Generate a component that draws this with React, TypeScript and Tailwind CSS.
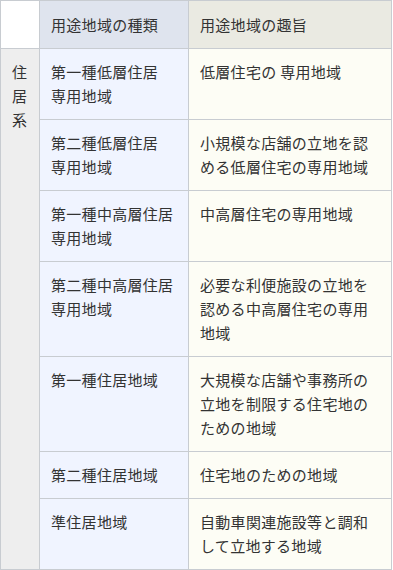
import { Fragment } from "react";

const rows: { kind: string[]; desc: string }[] = [
  { kind: ["第一種低層住居", "専用地域"], desc: "低層住宅の 専用地域" },
  { kind: ["第二種低層住居", "専用地域"], desc: "小規模な店舗の立地を認める低層住宅の専用地域" },
  { kind: ["第一種中高層住居", "専用地域"], desc: "中高層住宅の専用地域" },
  { kind: ["第二種中高層住居", "専用地域"], desc: "必要な利便施設の立地を認める中高層住宅の専用地域" },
  { kind: ["第一種住居地域"], desc: "大規模な店舗や事務所の立地を制限する住宅地のための地域" },
  { kind: ["第二種住居地域"], desc: "住宅地のための地域" },
  { kind: ["準住居地域"], desc: "自動車関連施設等と調和して立地する地域" },
];

const cell = "border-r border-b border-[#c8ccd1] px-[11px] py-[11px]";
const head = "border-r border-b border-[#c8ccd1] px-[11px] pt-[12px] pb-[11px]";

export default function App() {
  return (
    <div
      className="bg-white text-[15px] leading-6 tracking-[0.3px] text-[#333333]"
      style={{ fontFamily: '"Noto Sans CJK JP", "Noto Sans", sans-serif' }}
    >
      <div className="grid w-[392px] grid-cols-[39px_149px_203px] border-l border-t border-[#c8ccd1]">
        <div className={head + " bg-white"} />
        <div className={head + " bg-[#dfe4ee]"}>用途地域の種類</div>
        <div className={head + " bg-[#eaeae2]"}>用途地域の趣旨</div>

        <div className={cell + " row-span-7 bg-[#eeeeee] break-all"}>住居系</div>
        {rows.map((r, i) => (
          <Fragment key={i}>
            <div className={cell + " bg-[#f0f4ff]"}>
              {r.kind.map((k, j) => (
                <div key={j}>{k}</div>
              ))}
            </div>
            <div className={cell + " bg-[#fdfdf5]"}>{r.desc}</div>
          </Fragment>
        ))}
      </div>
    </div>
  );
}
